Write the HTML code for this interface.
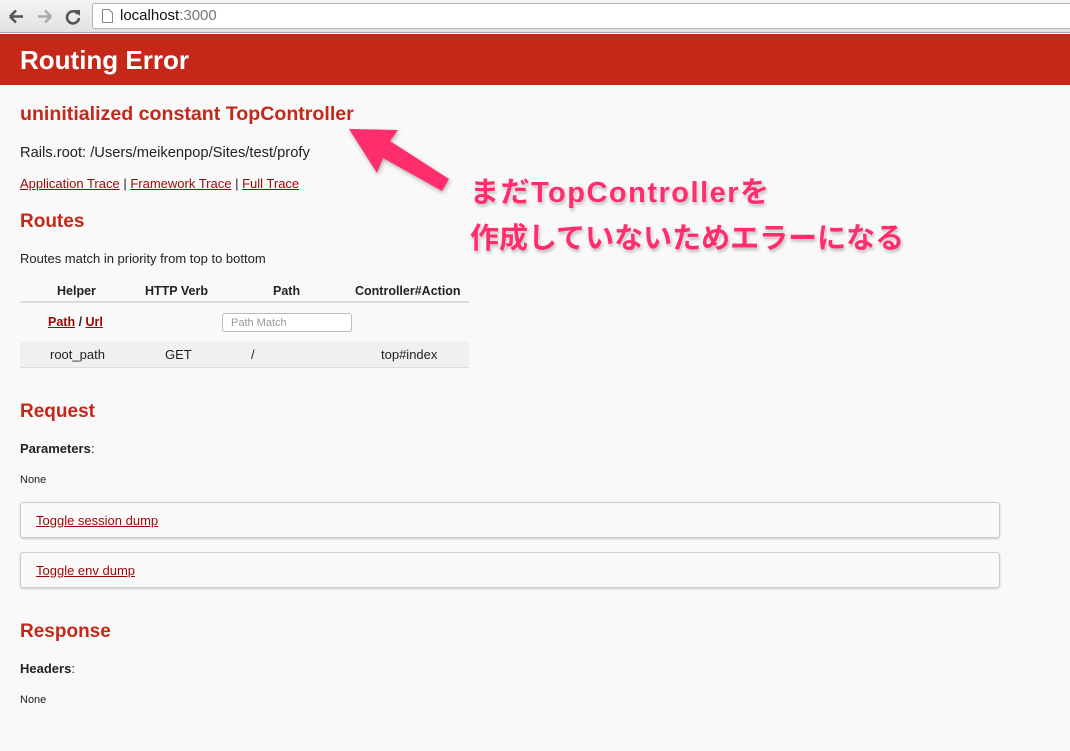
<!DOCTYPE html>
<html><head><meta charset="utf-8"><style>
*{margin:0;padding:0;box-sizing:border-box}
body{width:1070px;height:751px;overflow:hidden;background:#f9f9f9;font-family:"Liberation Sans",Helvetica,Arial,sans-serif;color:#222;position:relative}
.chrome{position:absolute;left:0;top:0;width:1070px;height:33px;background:linear-gradient(#f4f4f4,#e2e2e2);border-bottom:1px solid #a8a8a8}
.url{position:absolute;left:92px;top:3px;width:990px;height:26px;background:#fff;border:1px solid #b5b5b5;border-radius:3px;font-size:15px;line-height:24px;padding-left:27px;color:#111}
.url span{color:#777}
.hdr{position:absolute;left:0;top:34px;width:1070px;height:51px;background:#c52818;color:#fff;font-weight:bold;font-size:26px;padding:11px 0 0 20px}
a{color:#980905;text-decoration:underline}
.abs{position:absolute}
h2{position:absolute;color:#c52818;font-size:19px;font-weight:bold;left:20px}
.p{position:absolute;left:20px;font-size:13px}
.th{position:absolute;top:284px;font-size:12.5px;font-weight:bold}
.td{position:absolute;font-size:13px;top:347px}
.box{position:absolute;left:20px;width:980px;height:36px;border:1px solid #ccc;border-radius:3px;box-shadow:0 1px 2px #ccc;background:#f9f9f9;font-size:13px;padding:10px 0 0 15px}
.jp{position:absolute;left:470px;font-family:"Liberation Sans","Noto Sans CJK JP",sans-serif;font-size:29px;font-weight:bold;color:#ff2d6c;text-shadow:0 0 3px #fff,1px 2px 3px rgba(0,0,0,.35)}
</style></head><body>
<div class="chrome">
<svg class="abs" style="left:8px;top:8px" width="76" height="17" viewBox="0 0 76 17">
<path d="M2 8.5H15M2 8.5L8 2.5M2 8.5L8 14.5" stroke="#555" stroke-width="2.6" fill="none"/>
<path d="M30 8.5H43M43 8.5L37 2.5M43 8.5L37 14.5" stroke="#aaa" stroke-width="2.6" fill="none"/>
<path d="M70 6A6 6 0 1 0 71 10" stroke="#555" stroke-width="2.6" fill="none"/><path d="M66 2L72 2L72 8Z" fill="#555"/>
</svg>
<div class="url"><svg class="abs" style="left:9px;top:5px" width="11" height="14"><path d="M.5 .5H7L10.5 4V13.5H.5Z" fill="#fff" stroke="#888"/></svg>localhost<span>:3000</span></div>
</div>
<div class="hdr">Routing Error</div>
<h2 style="top:103px;font-size:19.6px">uninitialized constant TopController</h2>
<div class="p" style="top:145px;font-size:14.7px">Rails.root: /Users/meikenpop/Sites/test/profy</div>
<div class="p" style="top:176px"><a>Application Trace</a> | <a>Framework Trace</a> | <a>Full Trace</a></div>
<h2 style="top:211px">Routes</h2>
<div class="p" style="top:251px">Routes match in priority from top to bottom</div>
<div class="th" style="left:57px">Helper</div>
<div class="th" style="left:145px">HTTP Verb</div>
<div class="th" style="left:273px">Path</div>
<div class="th" style="left:355px">Controller#Action</div>
<div class="abs" style="left:20px;top:301px;width:449px;height:2px;background:#ddd"></div>
<div class="abs" style="left:48px;top:315px;font-size:12.5px;font-weight:bold"><a>Path</a> / <a>Url</a></div>
<div class="abs" style="left:222px;top:313px;width:130px;height:19px;border:1px solid #bbb;border-radius:3px;background:#fff;font-size:11px;color:#999;padding:3px 0 0 8px">Path Match</div>
<div class="abs" style="left:20px;top:342px;width:449px;height:26px;background:#f0f0f0;border-bottom:1px solid #ddd"></div>
<div class="td" style="left:50px">root_path</div>
<div class="td" style="left:165px">GET</div>
<div class="td" style="left:251px">/</div>
<div class="td" style="left:381px">top#index</div>
<h2 style="top:401px">Request</h2>
<div class="p" style="top:441px"><b>Parameters</b>:</div>
<div class="p" style="top:474px;font-size:11px">None</div>
<div class="box" style="top:502px"><a>Toggle session dump</a></div>
<div class="box" style="top:552px"><a>Toggle env dump</a></div>
<h2 style="top:621px">Response</h2>
<div class="p" style="top:661px"><b>Headers</b>:</div>
<div class="p" style="top:694px;font-size:11px">None</div>
<svg class="abs" style="left:0;top:0;filter:drop-shadow(1px 2px 2px rgba(0,0,0,.3))" width="1070" height="751"><polygon points="349,129 398,130 390,141 449,179 442,191 383,158 377,173" fill="#ff2d6c"/></svg>
<div class="jp" style="top:169px;letter-spacing:1.5px">まだTopControllerを</div>
<div class="jp" style="top:215px">作成していないためエラーになる</div>
</body></html>
